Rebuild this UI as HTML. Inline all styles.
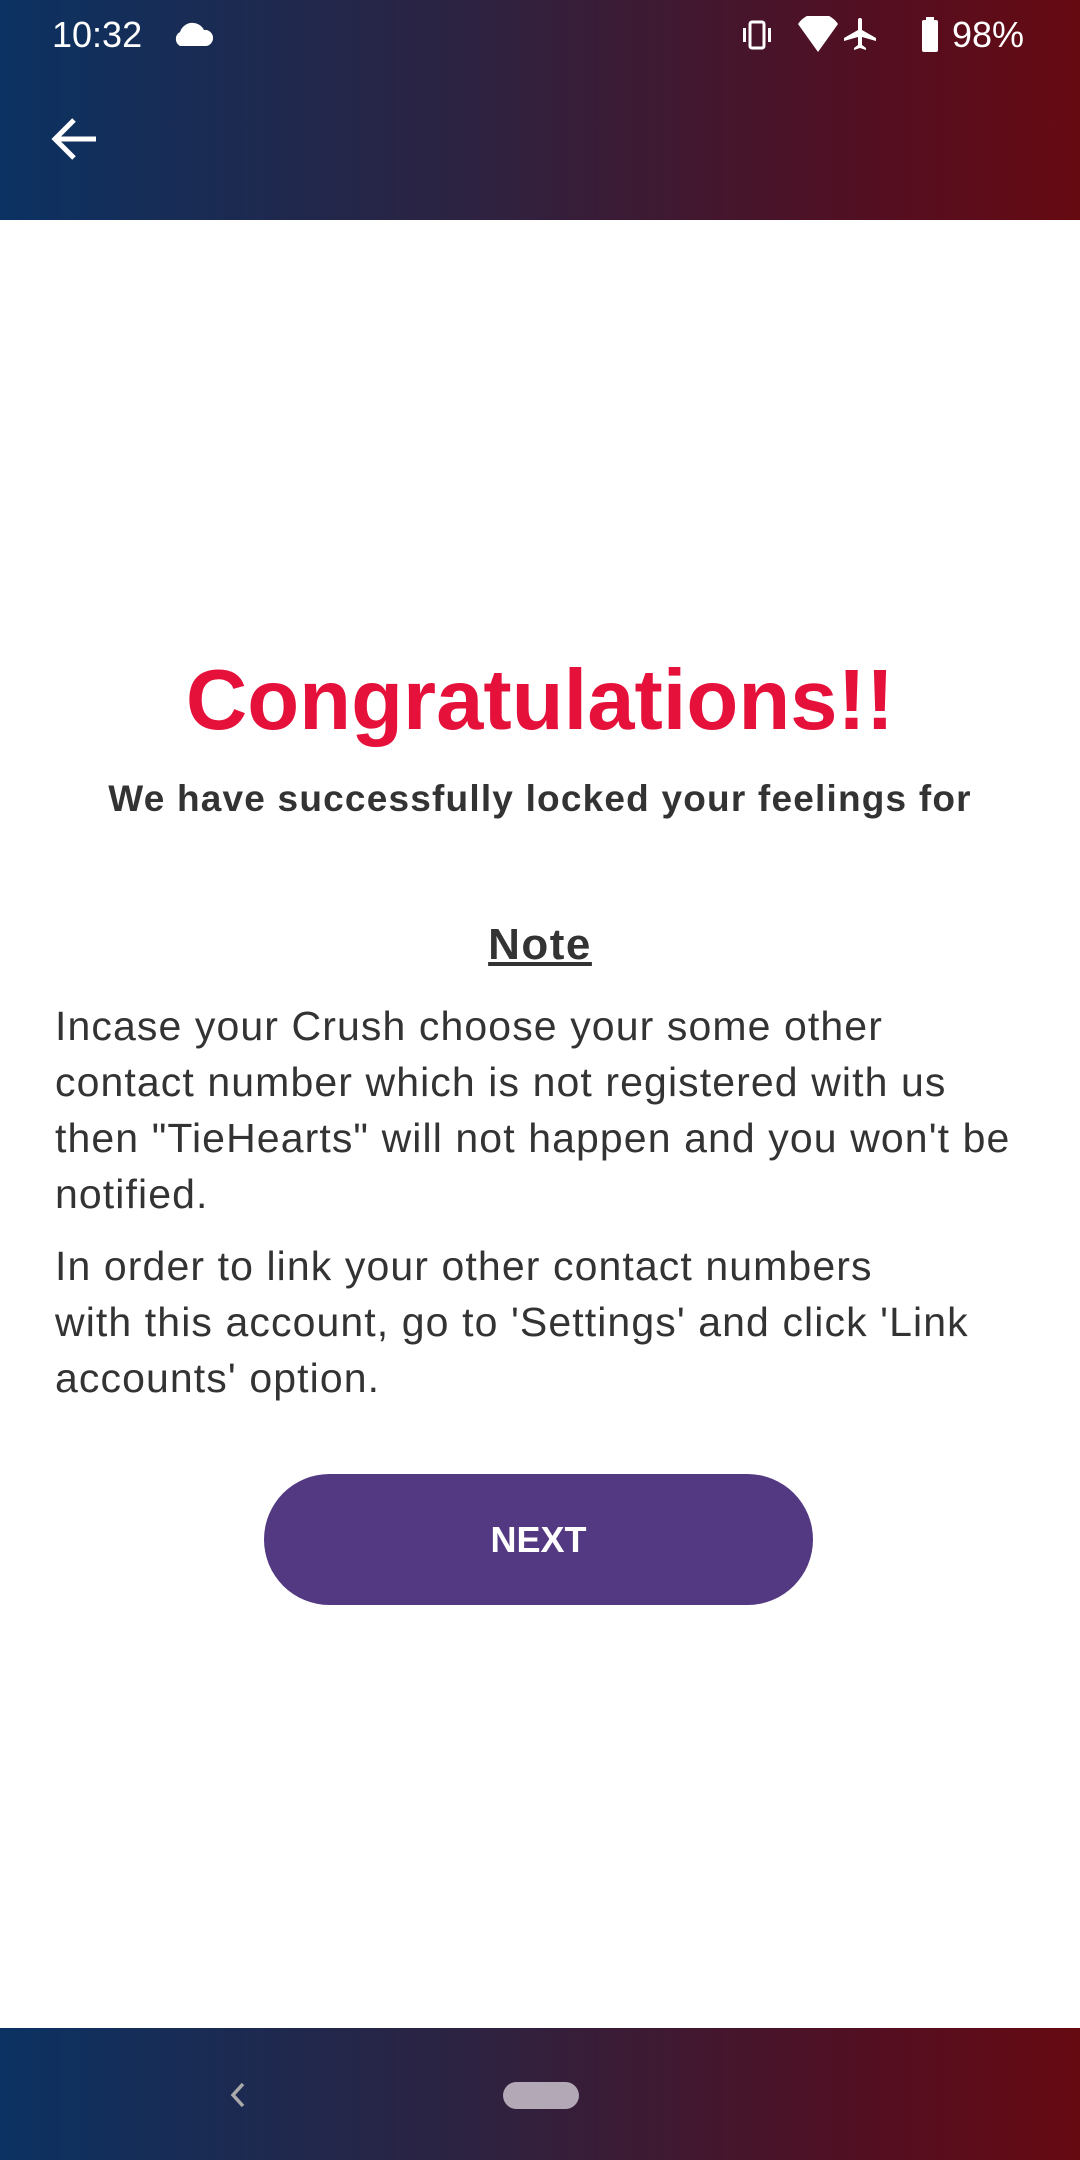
<!DOCTYPE html>
<html><head><meta charset="utf-8"><style>
*{margin:0;padding:0;box-sizing:border-box}
body{width:1080px;height:2160px;background:#fff;position:relative;font-family:"Liberation Sans",sans-serif;overflow:hidden}
.grad{background:linear-gradient(90deg,#0b3262 0%,#2e2240 45%,#520f22 80%,#660a12 100%);position:absolute;left:0;width:1080px}
.abs{position:absolute}
.t{color:#333;font-family:"Liberation Sans",sans-serif}
</style></head><body>
<div class="grad" style="top:0;height:220px"></div>
<div class="abs" style="left:52px;top:14px;color:#fff;font-size:36px">10:32</div>
<svg class="abs" style="left:172px;top:18px" width="42" height="30" viewBox="0 0 42 30"><path d="M8 28 a8 8 0 0 1 0-14 a13 13 0 0 1 24-2 a8 8 0 0 1 2 16z" fill="#fff"/></svg>
<svg class="abs" style="left:740px;top:16px" width="300" height="40" viewBox="0 0 300 40">
<rect x="10" y="6" width="14" height="26" rx="2" fill="none" stroke="#fff" stroke-width="3"/>
<rect x="3" y="12" width="3" height="14" fill="#fff"/><rect x="28" y="12" width="3" height="14" fill="#fff"/>
<path d="M58 8 a24 24 0 0 1 40 0 L78 36z" fill="#fff"/>
<path d="M118 4 v10 l-14 8 v3 l14-4 v8 l-4 3 v2 l6-2 l6 2 v-2 l-4-3 v-8 l14 4 v-3 l-14-8 v-10 a2 2 0 0 0 -4 0z" fill="#fff"/>
<rect x="182" y="4" width="16" height="32" rx="2" fill="#fff"/><rect x="186" y="1" width="8" height="4" fill="#fff"/>
</svg>
<div class="abs" style="left:952px;top:14px;color:#fff;font-size:36px">98%</div>
<svg class="abs" style="left:50px;top:116px" width="50" height="46" viewBox="0 0 50 46"><path d="M46 23 H6 M24 4 L5 23 L24 42" stroke="#fff" stroke-width="5" fill="none"/></svg>

<div class="abs t" style="left:0;width:1080px;top:652px;text-align:center;color:#e5113a;font-size:85px;font-weight:bold">Congratulations!!</div>
<div class="abs t" style="left:0;width:1080px;top:778px;text-align:center;font-size:37px;font-weight:bold;letter-spacing:1.2px">We have successfully locked your feelings for</div>
<div class="abs t" style="left:0;width:1080px;top:920px;text-align:center;font-size:44px;font-weight:bold;text-decoration:underline;letter-spacing:1.5px">Note</div>
<div class="abs t" style="left:55px;top:998px;width:1020px;font-size:41px;line-height:56px;white-space:nowrap;letter-spacing:1.1px">Incase your Crush choose your some other<br>contact number which is not registered with us<br>then "TieHearts" will not happen and you won't be<br>notified.</div>
<div class="abs t" style="left:55px;top:1238px;width:1020px;font-size:41px;line-height:56px;white-space:nowrap;letter-spacing:1.1px">In order to link your other contact numbers<br>with this account, go to 'Settings' and click 'Link<br>accounts' option.</div>
<div class="abs" style="left:264px;top:1474px;width:549px;height:131px;border-radius:66px;background:#533882;color:#fff;font-size:36px;font-weight:bold;text-align:center;line-height:131px">NEXT</div>

<div class="grad" style="top:2028px;height:132px"></div>
<svg class="abs" style="left:226px;top:2080px" width="24" height="30" viewBox="0 0 24 30"><path d="M17 4 L7 15 L17 26" stroke="#aaa" stroke-width="3.5" fill="none"/></svg>
<div class="abs" style="left:503px;top:2082px;width:76px;height:27px;border-radius:14px;background:#b3a8b6"></div>
</body></html>
